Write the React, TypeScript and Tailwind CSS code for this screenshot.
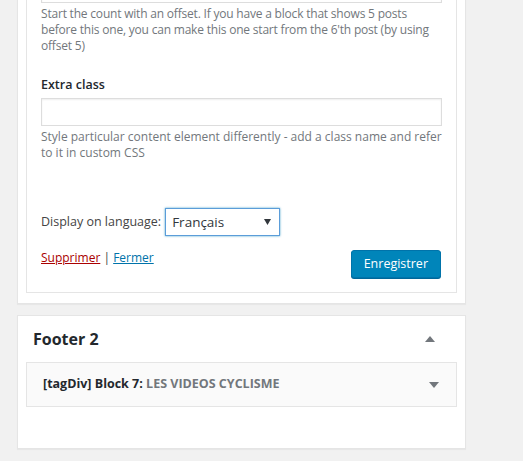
const font = { fontFamily: '"Open Sans", "Noto Sans", sans-serif' }

function Caret({ up = false }: { up?: boolean }) {
  return (
    <svg width="10" height="6" viewBox="0 0 10 6" className="shrink-0">
      <path d={up ? 'M0 6 L5 0 L10 6 Z' : 'M0 0 L10 0 L5 6 Z'} fill="#72777c" />
    </svg>
  )
}

export default function App() {
  return (
    <div className="w-[523px] h-[461px] overflow-hidden bg-[#f1f1f1] text-[12px] text-[#444]" style={font}>
      {/* widget form, scrolled so the top is cut */}
      <div className="ml-[17px] w-[449px] -mt-[22px] bg-white border border-[#e5e5e5] shadow-[0_1px_1px_rgba(0,0,0,0.04)] px-[8px] pb-[10px]">
        <div className="border border-t-0 border-[#e5e5e5] px-[14px] pb-[14px]">
          <div className="h-[24px] border border-t-0 border-[#ddd] shadow-[inset_0_1px_2px_rgba(0,0,0,0.07)]" />
          <p className="mt-[3px] leading-[16px] text-[12px] tracking-[-0.2px] text-[#72777c]">
            Start the count with an offset. If you have a block that shows 5 posts before this one, you can make this one start from the 6'th post (by using offset 5)
          </p>

          <div className="mt-[21px] font-semibold text-[#23282d] text-[12.5px] leading-[20px]">Extra class</div>
          <div className="mt-[3px] h-[28px] border border-[#ddd] shadow-[inset_0_1px_2px_rgba(0,0,0,0.07)]" />
          <p className="mt-[3px] leading-[16px] text-[12px] text-[#72777c]">
            Style particular content element differently - add a class name and refer to it in custom CSS
          </p>

          <div className="mt-[47px] flex items-center gap-[4px]">
            <span className="text-[#444] text-[12.5px]">Display on language:</span>
            <div className="w-[115px] h-[28px] border border-[#5b9dd9] shadow-[0_0_2px_rgba(30,140,190,0.8)] flex items-center justify-between pl-[6px] pr-[8px] text-[13.5px] text-[#32373c]">
              <span>Français</span>
              <svg width="7" height="6" viewBox="0 0 7 6"><path d="M0 0 L7 0 L3.5 6 Z" fill="#32373c" /></svg>
            </div>
          </div>

          <div className="mt-[12px] flex items-start justify-between">
            <div className="text-[12px] leading-[18px] pt-[1px]">
              <a className="text-[#a00] underline">Supprimer</a>
              <span className="text-[#444]"> | </span>
              <a className="text-[#0073aa] underline">Fermer</a>
            </div>
            <button className="h-[28px] px-[12px] mr-[1px] mt-[2px] rounded-[3px] bg-[#0085ba] border border-[#0073aa] shadow-[0_1px_0_#006799] text-white text-[12.5px]">
              Enregistrer
            </button>
          </div>
        </div>
      </div>

      {/* Footer 2 sidebar */}
      <div className="ml-[17px] mt-[11px] w-[449px] h-[134px] bg-white border border-[#e5e5e5] shadow-[0_1px_1px_rgba(0,0,0,0.04)] px-[8px]">
        <div className="h-[46px] flex items-center justify-between pl-[7px] pr-[22px]">
          <h2 className="text-[16px] font-bold text-[#23282d]">Footer 2</h2>
          <Caret up />
        </div>
        <div className="h-[45px] bg-[#fafafa] border border-[#e5e5e5] flex items-center justify-between pl-[16px] pr-[17px]">
          <span className="text-[12.5px] font-bold text-[#23282d]">
            [tagDiv] Block 7: <span className="text-[#72777c]">LES VIDEOS CYCLISME</span>
          </span>
          <Caret />
        </div>
      </div>
    </div>
  )
}
